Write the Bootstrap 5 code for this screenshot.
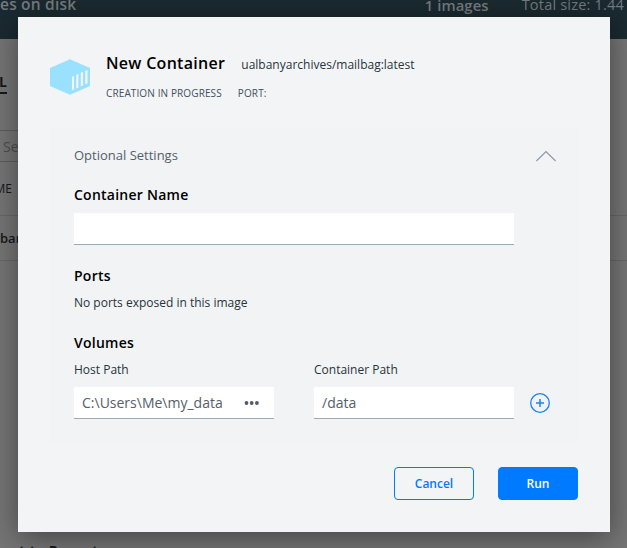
<!DOCTYPE html>
<html lang="en">
<head>
<meta charset="utf-8">
<meta name="viewport" content="width=device-width, initial-scale=1">
<title>New Container</title>
<link href="https://cdn.jsdelivr.net/npm/bootstrap@5.3.0/dist/css/bootstrap.min.css" rel="stylesheet">
<style>
body{font-family:"Open Sans",sans-serif;font-size:12px;line-height:20px;color:#27343b;background:#757575;height:548px}
/* dimmed page underneath the dialog */
.topbar{height:39px;background:#1a2a30;color:#757b7d;line-height:20px;font-size:14.5px;padding-right:3px}
.topbar>*{margin-top:-5px}
.disk-text{width:425px;font-weight:600;font-size:15.5px;letter-spacing:.2px;margin-top:-6px}
.img-count{width:97px;font-weight:600;font-size:14.8px;letter-spacing:.1px}
.size-text{letter-spacing:.2px}
.tab-on{margin-top:33px;width:7px;height:22px;border-bottom:2px solid #14191c;color:#14191c;font-size:14px;font-weight:700;display:flex;justify-content:flex-end}
.search-line{margin-top:36px;height:32px;width:300px;border:solid #5c5c5c;border-width:1px 0;line-height:31px;padding-left:3px;font-size:14px;color:#4c4f51}
.list-line{border-bottom:1px solid #676767;color:#14191c}
.list-head{height:54px;padding-top:17px}
.list-item{height:45px;padding-top:12px;font-size:13px;font-weight:600}
.clip-left{display:flex;justify-content:flex-end;overflow:hidden}
.list-head .clip-left{width:12px}
.foot-note{margin-top:280px;padding-left:19px;font-size:14px;letter-spacing:.35px;font-weight:700;color:#14191c}
/* dialog */
.dialog-box{left:18px;top:17px;width:592px;height:515px;background:#f3f4f6;padding:32px;box-shadow:0 6px 28px rgba(0,0,0,.42)}
.dialog-head{height:79px;padding-top:2px}
.head-icon{width:40px;height:36px;margin:8px 16px 0 0}
.title-text{font-size:16px;font-weight:600;letter-spacing:.3px;color:#000;line-height:24px;margin-right:16px}
.image-name{font-size:12px}
.status-line{font-size:10px;letter-spacing:.12px;line-height:16px;color:#445060;margin-top:10px;gap:16px}
.options{height:315px;background:#f1f3f5;padding:17px 24px 24px}
.opt-title{font-size:13px;color:#556069}
.chevron{margin-right:-2px}
.sect{font-size:14px;font-weight:600;letter-spacing:.25px;color:#000;line-height:20px;margin:0}
.field{background:#fff;border:0;border-bottom:1px solid #9aabb8;border-radius:0;height:32px;padding:0 8px;font-size:14px;line-height:31px;color:#556069}
.half{width:200px}
.wide-field{width:440px}
.name-head{margin-top:20px;margin-bottom:8px}
.ports-head{margin-top:21px;margin-bottom:7px}
.volumes-head{margin-top:20px;margin-bottom:7px}
.path-label{margin-bottom:7px}
.second{margin-left:40px}
.dots{margin-right:6px}
.add-icon{margin:33px 0 0 16px}
.actions{margin-top:24px;gap:24px}
.act{width:80px;height:33px;font-size:12px;font-weight:600;border-radius:4px;padding:0;--bs-btn-color:#007bff;--bs-btn-border-color:#007bff}
.act.btn-primary{--bs-btn-bg:#007bff;--bs-btn-color:#fff}
</style>
</head>
<body class="overflow-hidden position-relative">
<div aria-hidden="true">
  <div class="topbar d-flex overflow-hidden">
    <strong class="disk-text">es on disk</strong>
    <strong class="img-count">1 images</strong>
    <span class="size-text text-nowrap">Total size: 1.44</span>
  </div>
  <div class="tab-on">L</div>
  <div class="search-line">Search</div>
  <div class="list-line list-head"><span class="clip-left">ME</span></div>
  <div class="list-line list-item">bar</div>
  <div class="foot-note">t to Report</div>
</div>

<div class="dialog-box position-absolute" role="dialog" aria-label="New Container">
  <div class="dialog-head d-flex">
    <svg class="head-icon" viewBox="0 0 40 36"><path fill="#99e1ff" d="M20 0.3 40 9v18L20 35.7 0 27V9z"/><path fill="#f3f4f6" d="M22 17.8 24 17v13.5l-2 .8zM26.2 15.8l2.2-.9v13.6l-2.2.9zM30.8 13.8l2.2-.9v13.5l-2.2.9zM35.2 12l2.3-.9v13.3l-2.3.9z"/></svg>
    <div>
      <div class="d-flex align-items-baseline">
        <div class="title-text">New Container</div>
        <div class="image-name">ualbanyarchives/mailbag:latest</div>
      </div>
      <div class="status-line d-flex"><span>CREATION IN PROGRESS</span><span>PORT:</span></div>
    </div>
  </div>
  <div class="options">
    <div class="d-flex justify-content-between">
      <span class="opt-title">Optional Settings</span>
      <svg class="chevron" width="20" height="20" viewBox="0 0 20 20"><path d="M.4 16 10 6.500l9.600 9.500" fill="none" stroke="#8a9aaa" stroke-width="1.200"/></svg>
    </div>
    <h2 class="sect name-head">Container Name</h2>
    <input class="form-control field wide-field" aria-label="Container Name">
    <h2 class="sect ports-head">Ports</h2>
    <div class="ports-text">No ports exposed in this image</div>
    <h2 class="sect volumes-head">Volumes</h2>
    <div class="d-flex volume-row">
      <div class="half">
        <div class="path-label">Host Path</div>
        <div class="field d-flex justify-content-between align-items-center"><span>C:\Users\Me\my_data</span>
          <svg class="dots" width="16" height="6" viewBox="0 0 16 6"><g fill="#505d69"><circle cx="2.500" cy="3" r="1.900"/><circle cx="7.700" cy="3" r="1.900"/><circle cx="12.900" cy="3" r="1.900"/></g></svg>
        </div>
      </div>
      <div class="half second">
        <div class="path-label">Container Path</div>
        <div class="field">/data</div>
      </div>
      <svg class="add-icon" width="20" height="20" viewBox="0 0 20 20"><g fill="none" stroke="#1684f5" stroke-width="1.300"><circle cx="10" cy="10" r="9.300"/><path d="M6 10h8M10 6v8" stroke-width="1.500"/></g></svg>
    </div>
  </div>
  <div class="d-flex justify-content-end actions">
    <button class="btn btn-outline-primary act">Cancel</button>
    <button class="btn btn-primary act">Run</button>
  </div>
</div>
<script src="https://cdn.jsdelivr.net/npm/bootstrap@5.3.0/dist/js/bootstrap.bundle.min.js"></script>
</body>
</html>
